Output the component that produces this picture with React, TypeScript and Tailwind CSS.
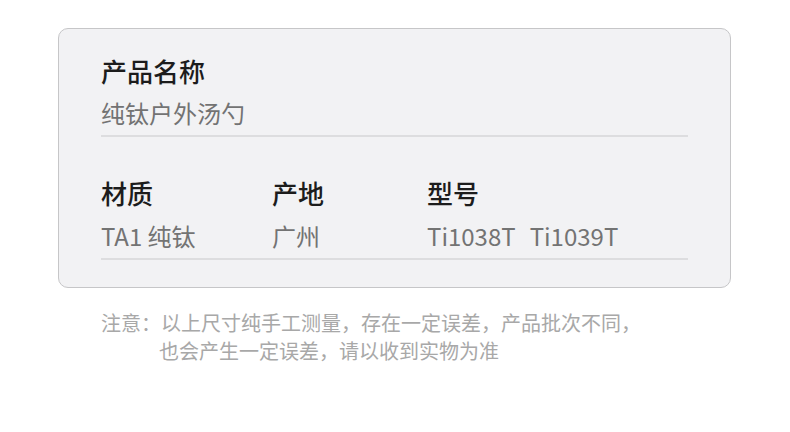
import React from "react";

const font = { fontFamily: '"Noto Sans CJK SC", "Noto Sans", sans-serif' };

export default function App() {
  return (
    <div className="w-[790px] h-[432px] bg-white overflow-hidden" style={font}>
      <div className="ml-[58px] mt-[28px] w-[673px] h-[260px] rounded-[10px] border border-[#c6c6c8] bg-[#f2f2f4] pt-[26px] pl-[42px]">
        <div className="text-[26px] leading-[32px] font-medium text-[#1c1c1c]">产品名称</div>
        <div className="mt-[10px] text-[24px] leading-[32px] text-[#737373]">纯钛户外汤勺</div>
        <div className="mt-[6px] w-[587px] h-[2px] bg-[#dddddf]" />
        <div className="mt-[40px] flex text-[26px] leading-[32px] font-medium text-[#1c1c1c]">
          <div className="w-[171px]">材质</div>
          <div className="w-[155px]">产地</div>
          <div>型号</div>
        </div>
        <div className="mt-[11px] flex text-[24px] leading-[32px] text-[#737373]">
          <div className="w-[171px]">TA1 纯钛</div>
          <div className="w-[155px]">广州</div>
          <div className="flex gap-[14px]">
            <span>Ti1038T</span>
            <span>Ti1039T</span>
          </div>
        </div>
        <div className="mt-[6px] w-[587px] h-[2px] bg-[#dddddf]" />
      </div>
      <div className="ml-[101px] mt-[21px] text-[20px] leading-[28px] text-[#a8a8a8]">
        <div>注意：以上尺寸纯手工测量，存在一定误差，产品批次不同，</div>
        <div className="pl-[58px]">也会产生一定误差，请以收到实物为准</div>
      </div>
    </div>
  );
}
